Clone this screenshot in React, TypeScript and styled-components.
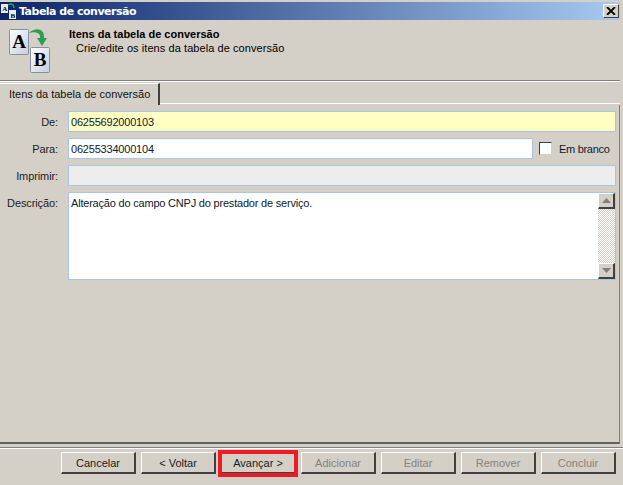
import React from "react";
import styled, { createGlobalStyle } from "styled-components";

const Global = createGlobalStyle`
  html, body { margin: 0; padding: 0; background: #d4d0c8; }
  * { box-sizing: border-box; }
`;

const Win = styled.div`
  width: 623px; height: 485px; overflow: hidden; background: #d4d0c8;
  font-family: "Liberation Sans", Arial, sans-serif; font-size: 11px; color: #000;
  display: flex; flex-direction: column; padding-top: 2px;
`;
const TitleBar = styled.div`
  height: 18px; margin-right: 3px; flex: none;
  background: linear-gradient(90deg, #0a246a, #a6caf0);
  display: flex; align-items: center; padding: 0 1px;
  color: #fff; font-weight: bold; font-size: 11px; font-family: "DejaVu Sans", sans-serif;
  letter-spacing: -0.5px;
`;
const TitleText = styled.span` margin-left: 3px; flex: 1; `;
const CloseBtn = styled.div`
  width: 16px; height: 14px; background: #d4d0c8;
  border-style: solid; border-width: 1px; border-color: #fff #404040 #404040 #fff;
  display: flex; align-items: center; justify-content: center;
`;
const Header = styled.div`
  height: 61px; flex: none; margin-right: 3px; padding: 7px 0 0 9px;
  display: flex; border-bottom: 1px solid #808080;
`;
const HeaderText = styled.div`
  margin-left: 18px; line-height: 14px; color: #000;
`;
const HeaderTitle = styled.div` font-weight: bold; `;
const HeaderSub = styled.div` padding-left: 7px; letter-spacing: 0.07px; `;
const WhiteLine = styled.div` height: 1px; flex: none; background: #fff; margin-right: 3px; `;
const TabRow = styled.div`
  height: 23px; flex: none; margin-right: 3px; display: flex; align-items: flex-start;
`;
const Tab = styled.div`
  width: 160px; height: 22px; margin-top: 1px; padding: 4px 0 0 9px;
  border-right: 2px solid #404040; border-top: 1px solid #fff; background: #d4d0c8;
  white-space: nowrap; color: #101010;
`;
const TabRest = styled.div`
  flex: 1; height: 22px; border-bottom: 1px solid #fff;
`;
const Panel = styled.div`
  height: 339px; flex: none; margin-right: 3px; padding: 6px 3px 0 0;
  border-right: 1px solid #808080; border-bottom: 2px solid #606060;
  display: flex; flex-direction: column; gap: 6px;
`;
const Row = styled.div<{ $h?: number }>`
  display: flex; height: ${p => p.$h ?? 21}px; align-items: flex-start;
`;
const Label = styled.label`
  width: 58px; text-align: right; margin-right: 10px; flex: none; padding-top: 5px; color: #222;
  letter-spacing: -0.1px;
`;
const Field = styled.div<{ $bg?: string }>`
  flex: 1; height: 100%; background: ${p => p.$bg ?? "#fff"};
  border: 1px solid #a9c4e4; padding: 3px 0 0 2px; line-height: 14px; color: #10202a;
  letter-spacing: -0.2px;
  display: flex; justify-content: space-between;
`;
const CheckWrap = styled.div`
  width: 83px; flex: none; display: flex; align-items: center; height: 100%; padding-left: 6px; gap: 7px;
  letter-spacing: -0.3px; color: #10202a;
`;
const Check = styled.div`
  width: 13px; height: 13px; background: #fff;
  border-style: solid; border-width: 1px; border-color: #404040 #d4d0c8 #d4d0c8 #404040;
`;
const Scroll = styled.div`
  width: 17px; height: 86px; margin: -3px 0 0 0; display: flex; flex-direction: column; flex: none;
  background: repeating-conic-gradient(#fff 0 25%, #d4d0c8 0 50%) 0 0 / 2px 2px;
  justify-content: space-between;
`;
const ScrollBtn = styled.div`
  height: 16px; background: #d4d0c8;
  border-style: solid; border-width: 1px 2px 2px 1px; border-color: #fff #404040 #404040 #fff;
  display: flex; align-items: center; justify-content: center;
`;
const Sep = styled.div`
  height: 2px; flex: none; margin-top: 3px; background: linear-gradient(#808080 50%, #fff 50%);
`;
const Footer = styled.div`
  display: flex; gap: 5px; justify-content: flex-end; padding: 3px 7px 0 0;
`;
const Btn = styled.div<{ $off?: boolean; $mark?: boolean }>`
  width: 75px; height: 22px; position: relative; background: #d4d0c8;
  border-style: solid; border-width: 1px 2px 2px 1px; border-color: #fff #404040 #404040 #fff;
  display: flex; align-items: center; justify-content: center;
  color: ${p => (p.$off ? "#85827a" : "#1a1a1a")};
  ${p => p.$mark && `&::after { content: ""; position: absolute; inset: -3px -4px -5px -4px; border: 4px solid #ed1c24; }`}
`;

const Tile = ({ x, y, c }: { x: number; y: number; c: string }) => (
  <g>
    <rect x={x + 0.5} y={y + 0.5} width={19} height={25} rx={1} fill="url(#t)" stroke="#8a8f9c" />
    <text x={x + 10} y={y + 19} textAnchor="middle" fontFamily="Liberation Serif, serif" fontWeight="bold" fontSize="19" fill="#000">{c}</text>
  </g>
);
const Logo = () => (
  <svg width={42} height={47} viewBox="0 0 42 47" style={{ flex: "none" }}>
    <defs>
      <linearGradient id="t" x1="0" y1="0" x2="1" y2="1">
        <stop offset="0" stopColor="#fff" />
        <stop offset="1" stopColor="#c4cde0" />
      </linearGradient>
    </defs>
    <Tile x={0} y={2} c="A" />
    <Tile x={21} y={20} c="B" />
    <path d="M20 6 C26 0 36 1 35 11 L38 11 L33 19 L28 11 L31 11 C32 6 26 4 20 6 Z" fill="#2e9e50" />
  </svg>
);
const MiniLogo = () => (
  <svg width={15} height={16} viewBox="0 0 15 16" style={{ flex: "none" }}>
    <rect x="0" y="1" width="7" height="9" fill="#e8ecf4" />
    <rect x="8" y="7" width="7" height="9" fill="#e8ecf4" />
    <text x="3.5" y="8" textAnchor="middle" fontSize="7" fontWeight="bold" fontFamily="Liberation Serif" fill="#000">A</text>
    <text x="11.5" y="14.5" textAnchor="middle" fontSize="7" fontWeight="bold" fontFamily="Liberation Serif" fill="#000">B</text>
    <path d="M7 2 C10 0 13 1 13 5" stroke="#2e9e50" strokeWidth="1.5" fill="none" />
  </svg>
);
const Tri = ({ down }: { down?: boolean }) => (
  <svg width={9} height={5} viewBox="0 0 9 5">
    <path d={down ? "M0 0H9L4.5 5Z" : "M0 5H9L4.5 0Z"} fill="#7f7f7f" />
  </svg>
);

export default function App() {
  return (
    <Win>
      <Global />
      <TitleBar>
        <MiniLogo />
        <TitleText>Tabela de conversão</TitleText>
        <CloseBtn>
          <svg width={10} height={8} viewBox="0 0 10 8"><path d="M1 0L9 8M9 0L1 8" stroke="#000" strokeWidth="1.8" /></svg>
        </CloseBtn>
      </TitleBar>
      <Header>
        <Logo />
        <HeaderText>
          <HeaderTitle>Itens da tabela de conversão</HeaderTitle>
          <HeaderSub>Crie/edite os itens da tabela de conversão</HeaderSub>
        </HeaderText>
      </Header>
      <WhiteLine />
      <TabRow>
        <Tab>Itens da tabela de conversão</Tab>
        <TabRest />
      </TabRow>
      <Panel>
        <Row>
          <Label>De:</Label>
          <Field $bg="#ffffc4">06255692000103</Field>
        </Row>
        <Row>
          <Label>Para:</Label>
          <Field>06255334000104</Field>
          <CheckWrap><Check /><span>Em branco</span></CheckWrap>
        </Row>
        <Row>
          <Label>Imprimir:</Label>
          <Field $bg="#ededed" />
        </Row>
        <Row $h={88}>
          <Label>Descrição:</Label>
          <Field>
            <span>Alteração do campo CNPJ do prestador de serviço.</span>
            <Scroll>
              <ScrollBtn><Tri /></ScrollBtn>
              <ScrollBtn><Tri down /></ScrollBtn>
            </Scroll>
          </Field>
        </Row>
      </Panel>
      <Sep />
      <Footer>
        <Btn>Cancelar</Btn>
        <Btn>&lt; Voltar</Btn>
        <Btn $mark>Avançar &gt;</Btn>
        <Btn $off>Adicionar</Btn>
        <Btn $off>Editar</Btn>
        <Btn $off>Remover</Btn>
        <Btn $off>Concluir</Btn>
      </Footer>
    </Win>
  );
}
